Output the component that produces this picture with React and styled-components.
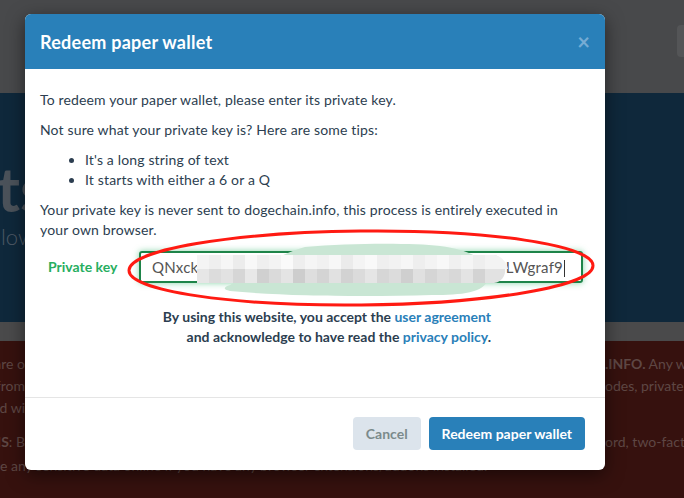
import React from 'react';
import styled, { createGlobalStyle } from 'styled-components';

const GlobalStyle = createGlobalStyle`
  html, body {
    margin: 0;
    padding: 0;
    overflow: hidden;
    font-family: Lato, 'Open Sans', sans-serif;
  }
  * { box-sizing: border-box; }
`;

const Page = styled.div`
  position: relative;
  width: 684px;
  height: 498px;
  overflow: hidden;
  display: flex;
  flex-direction: column;
`;

const TopBar = styled.div`
  height: 93px;
  background: #48494b;
  display: flex;
  justify-content: flex-end;
  padding-top: 25px;
`;

const TopButton = styled.div`
  width: 14px;
  height: 32px;
  margin-right: -7px;
  border-radius: 4px;
  background: #545557;
`;

const Hero = styled.div`
  height: 229px;
  background: #0f283b;
  display: flex;
  flex-direction: column;
  padding-top: 64px;
`;

const HeroTitle = styled.div`
  font-size: 62px;
  font-weight: 700;
  line-height: 62px;
  color: #4b525a;
  margin-left: -3px;
  white-space: nowrap;
`;

const HeroSub = styled.div`
  font-size: 22px;
  font-weight: 300;
  color: #4d5865;
  margin-top: 4px;
  margin-left: 1px;
  white-space: nowrap;
`;

const Strip = styled.div`
  height: 19px;
  background: #4a4a4b;
`;

const Warning = styled.div`
  flex: 1;
  background: #36110e;
  padding-top: 12px;
  font-size: 14px;
  color: #5e4744;
`;

const WarnRow = styled.div`
  display: grid;
  grid-template-columns: 25px 580px 1fr;
  line-height: 22px;
  white-space: nowrap;
  margin-top: ${(p) => (p.$gap ? '12px' : '0')};
`;

const WarnLeft = styled.div`
  overflow: hidden;
  display: flex;
  justify-content: flex-end;
`;

const WarnRight = styled.div`
  overflow: hidden;
`;

const WarnLine = styled.div`
  line-height: 22px;
  white-space: nowrap;
  margin-top: 2px;
`;

const Modal = styled.div`
  position: absolute;
  top: 14px;
  left: 25px;
  width: 580px;
  background: #fff;
  border-radius: 6px;
  box-shadow: 0 5px 18px rgba(0, 0, 0, 0.5);
  color: #2c3e50;
`;

const Header = styled.div`
  height: 55px;
  background: #2980b9;
  border-radius: 6px 6px 0 0;
  display: flex;
  align-items: center;
  justify-content: space-between;
  padding: 0 15px;
`;

const Title = styled.h4`
  margin: 0;
  font-size: 18px;
  letter-spacing: 0.25px;
  font-weight: 700;
  color: #fff;
`;

const Close = styled.span`
  font-size: 22px;
  font-weight: 700;
  line-height: 1;
  color: #76acd4;
`;

const Body = styled.div`
  position: relative;
  padding: 21px 20px 50px 15px;
  font-size: 14px;
  line-height: 20px;
`;

const Para = styled.p`
  margin: 0 0 10px;
  letter-spacing: 0.15px;
`;

const Tips = styled.ul`
  margin: 0 0 10px;
  padding-left: 45px;
  letter-spacing: 0.15px;
`;

const FormRow = styled.div`
  display: flex;
  align-items: center;
  margin-top: 11px;
  padding: 0 2px 0 8px;
`;

const Label = styled.label`
  width: 91px;
  font-weight: 700;
  color: #27ae60;
`;

const KeyField = styled.div`
  position: relative;
  flex: 1;
  height: 32px;
  border: 2px solid #1e8449;
  border-radius: 3px;
  box-shadow: 0 0 6px rgba(39, 174, 96, 0.55);
  display: flex;
  align-items: center;
  justify-content: space-between;
  padding: 0 16px 0 11px;
  font-size: 15px;
  letter-spacing: 0.2px;
  color: #555;
`;

const Caret = styled.span`
  display: inline-block;
  width: 1px;
  height: 17px;
  margin-left: 1px;
  background: #333;
  vertical-align: middle;
`;

const Redaction = styled.svg`
  position: absolute;
  left: 41px;
  top: -12px;
`;

const Terms = styled.div`
  margin: 24px 94px 0 0;
  text-align: right;
  font-weight: 700;
`;

const Link = styled.a`
  color: #2980b9;
  text-decoration: none;
`;

const Annotation = styled.svg`
  position: absolute;
  left: 91px;
  top: 148px;
  pointer-events: none;
`;

const Footer = styled.div`
  border-top: 1px solid #e5e5e5;
  padding: 19px 20px 20px;
  display: flex;
  justify-content: flex-end;
  gap: 8px;
`;

const Button = styled.button`
  height: 33px;
  padding: 0 13px;
  border: none;
  border-radius: 4px;
  font-family: Lato, sans-serif;
  font-size: 14px;
  font-weight: 700;
  background: ${(p) => (p.$primary ? '#2980b9' : '#dce4ec')};
  color: ${(p) => (p.$primary ? '#fff' : '#7b8a8b')};
`;

const topShades = ['#f4f4f4', '#efefef', '#f6f6f6', '#ececec', '#f8f8f8', '#efefef', '#f3f3f3', '#fafafa', '#eeeeee', '#f5f5f5', '#f1f1f1', '#f7f7f7', '#ebebeb', '#f4f4f4', '#f9f9f9', '#efefef', '#f2f2f2', '#f6f6f6', '#eeeeee', '#f3f3f3', '#f8f8f8', '#f0f0f0', '#f5f5f5', '#eeeeee'];
const bottomShades = ['#e6e6e6', '#dcdcdc', '#e2e2e2', '#d6d6d6', '#e8e8e8', '#d0d0d0', '#dadada', '#e4e4e4', '#cdcdcd', '#dedede', '#d4d4d4', '#e1e1e1', '#d2d2d2', '#dbdbdb', '#e5e5e5', '#d6d6d6', '#dcdcdc', '#cfcfcf', '#e0e0e0', '#d5d5d5', '#dddddd', '#d8d8d8', '#e3e3e3', '#d3d3d3'];

// svg origin sits 2px inside the field's left border, 12px above its top edge
const RedactBlur = () => (
  <Redaction width="340" height="58" viewBox="0 0 340 58">
    <path
      d="M48 44 C70 30 100 12 123 6 C170 2 230 2 258 5 C292 9 310 22 306 38 C302 52 280 54 250 54 C180 56 100 55 48 50 C40 48 42 46 48 44 Z"
      fill="#c9e6d4"
    />
    {topShades.map((c, i) => (
      <rect key={'t' + i} x={15 + i * 12} y={14} width={12} height={14} fill={c} />
    ))}
    {bottomShades.map((c, i) => (
      <rect key={'b' + i} x={15 + i * 12} y={28} width={12} height={14} fill={c} />
    ))}
    <path d="M303 14 L312 14 C326 16 328 40 312 42 L303 42 Z" fill="#e2e2e2" />
    <path d="M303 14 L312 14 C320 15 325 22 326 28 L303 28 Z" fill="#f3f3f3" />
  </Redaction>
);

export default function App() {
  return (
    <>
      <GlobalStyle />
      <Page>
        <TopBar>
          <TopButton />
        </TopBar>
        <Hero>
          <HeroTitle>ts</HeroTitle>
          <HeroSub>low</HeroSub>
        </Hero>
        <Strip />
        <Warning>
          <WarnRow>
            <WarnLeft>are o</WarnLeft>
            <div />
            <WarnRight>
              <b>.INFO.</b> Any wallet
            </WarnRight>
          </WarnRow>
          <WarnRow>
            <WarnLeft>from</WarnLeft>
            <div />
            <WarnRight>odes, private</WarnRight>
          </WarnRow>
          <WarnRow>
            <WarnLeft>ed wi</WarnLeft>
            <div />
            <WarnRight>&nbsp;</WarnRight>
          </WarnRow>
          <WarnRow $gap>
            <WarnLeft>
              <b>IS</b>: B
            </WarnLeft>
            <div />
            <WarnRight>ord, two-factor</WarnRight>
          </WarnRow>
          <WarnLine>
            e any sensitive data online if you have any browser extensions/addons installed.
          </WarnLine>
        </Warning>

        <Modal>
          <Header>
            <Title>Redeem paper wallet</Title>
            <Close>×</Close>
          </Header>
          <Body>
            <Para>To redeem your paper wallet, please enter its private key.</Para>
            <Para>Not sure what your private key is? Here are some tips:</Para>
            <Tips>
              <li>It's a long string of text</li>
              <li>It starts with either a 6 or a Q</li>
            </Tips>
            <Para>
              Your private key is never sent to dogechain.info, this process is entirely executed in
              your own browser.
            </Para>
            <FormRow>
              <Label>Private key</Label>
              <KeyField>
                <span>QNxck</span>
                <span>
                  LWgraf9
                  <Caret />
                </span>
                <RedactBlur />
              </KeyField>
            </FormRow>
            <Terms>
              By using this website, you accept the <Link>user agreement</Link>
              <br />
              and acknowledge to have read the <Link>privacy policy</Link>.
            </Terms>
            <Annotation width="490" height="90" viewBox="0 0 490 90">
              <ellipse
                cx="245"
                cy="51"
                rx="232"
                ry="37"
                fill="none"
                stroke="#ff1a12"
                strokeWidth="3"
                transform="rotate(-0.6 245 51)"
              />
            </Annotation>
          </Body>
          <Footer>
            <Button>Cancel</Button>
            <Button $primary>Redeem paper wallet</Button>
          </Footer>
        </Modal>
      </Page>
    </>
  );
}
